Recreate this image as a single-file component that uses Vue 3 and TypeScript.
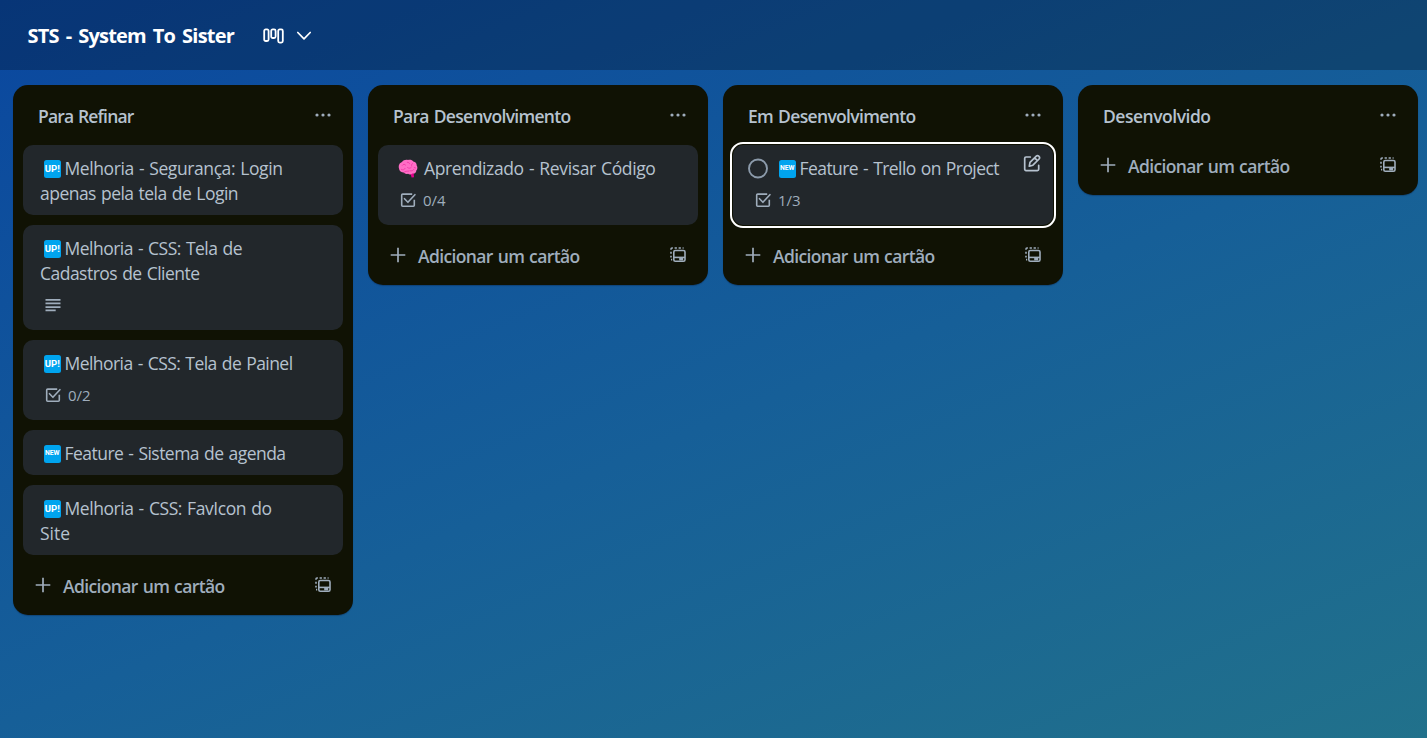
<script setup lang="ts">
import type { Directive } from 'vue'

type Tag = 'up' | 'new' | 'brain'
interface Line { text: string; width: number }
interface Card {
  tag: Tag
  lines: Line[]
  checklist?: string
  description?: boolean
  active?: boolean
}
interface List { title: Line; cards: Card[] }

const lists: List[] = [
  {
    title: { text: 'Para Refinar', width: 95.5 },
    cards: [
      {
        tag: 'up',
        lines: [
          { text: 'Melhoria - Segurança: Login', width: 218 },
          { text: 'apenas pela tela de Login', width: 198 },
        ],
      },
      {
        tag: 'up',
        lines: [
          { text: 'Melhoria - CSS: Tela de', width: 177.5 },
          { text: 'Cadastros de Cliente', width: 159.5 },
        ],
        description: true,
      },
      { tag: 'up', lines: [{ text: 'Melhoria - CSS: Tela de Painel', width: 228 }], checklist: '0/2' },
      { tag: 'new', lines: [{ text: 'Feature - Sistema de agenda', width: 221 }] },
      {
        tag: 'up',
        lines: [
          { text: 'Melhoria - CSS: FavIcon do', width: 207 },
          { text: 'Site', width: 30 },
        ],
      },
    ],
  },
  {
    title: { text: 'Para Desenvolvimento', width: 177.5 },
    cards: [
      { tag: 'brain', lines: [{ text: 'Aprendizado - Revisar Código', width: 231.5 }], checklist: '0/4' },
    ],
  },
  {
    title: { text: 'Em Desenvolvimento', width: 167.5 },
    cards: [
      { tag: 'new', lines: [{ text: 'Feature - Trello on Project', width: 199.5 }], checklist: '1/3', active: true },
    ],
  },
  { title: { text: 'Desenvolvido', width: 107.5 }, cards: [] },
]

// Spreads the letters of a run so that it takes the given width.
const vFit: Directive<HTMLElement, number> = {
  mounted(el, { value }) {
    const natural = el.getBoundingClientRect().width
    const count = (el.textContent ?? '').length
    el.style.letterSpacing = `${(value - natural) / count}px`
  },
}
</script>

<template>
  <div class="board">
    <header class="topbar">
      <h1><span v-fit="206.5">STS - System To Sister</span></h1>
      <svg class="view" width="22" height="16" viewBox="0 0 22 16">
        <g fill="none" stroke="#fff" stroke-width="1.8">
          <rect x="1.200" y="1.400" width="4.400" height="11.600" rx="1.500" />
          <rect x="8.200" y="1.400" width="4.400" height="8.600" rx="1.500" />
          <rect x="15.200" y="1.400" width="4.600" height="13.200" rx="1.500" />
        </g>
      </svg>
      <svg class="chevron" width="16" height="10" viewBox="0 0 16 10">
        <path d="M1.8 1.5 8 7.8l6.2-6.3" fill="none" stroke="#fff" stroke-width="1.7" stroke-linecap="round" stroke-linejoin="round" />
      </svg>
    </header>

    <main class="lists">
      <section v-for="list in lists" :key="list.title.text" class="list">
        <div class="list-head">
          <h2><span v-fit="list.title.width">{{ list.title.text }}</span></h2>
          <svg class="dots" width="20" height="20" viewBox="0 0 20 20" fill="#9fadbc">
            <circle cx="4" cy="10" r="1.6" /><circle cx="10" cy="10" r="1.6" /><circle cx="16" cy="10" r="1.6" />
          </svg>
        </div>

        <article v-for="card in list.cards" :key="card.lines[0].text" class="card" :class="{ active: card.active }">
          <div class="line">
            <svg v-if="card.active" class="ring" width="22" height="22" viewBox="0 0 22 22">
              <circle cx="11" cy="10.500" r="9" fill="none" stroke="#8c9bab" stroke-width="1.9" />
            </svg>
            <svg v-if="card.tag === 'brain'" class="brain" width="20" height="19" viewBox="0 0 20 19">
              <path d="M12.2 13.5 13.6 18.6 16 18.2 15.6 13Z" fill="#e3008c" />
              <path d="M1 9.5C.2 6.5 1.5 3.8 4 3 5.2 1.1 8 .2 10 1c2.200-.6 4.400 0 5.300 1.500 2.100.3 3.500 2 3.400 4 1.100 1.500.9 3.800-.4 5 .1 2.200-1.900 3.500-4 3-1.100 1.100-3 1.200-4.300.2-1.700.6-3.300.1-4.200-1.100C3.400 13.500 1.200 12 1 9.500Z" fill="#ff6dc6" />
              <g fill="none" stroke="#f03aa7" stroke-width=".9" stroke-linecap="round">
                <path d="M4.300 6.300c1-1.500 2.500-1.300 3.300-.2M9.300 3.300c1.200-.3 2 .4 2.200 1.400M14.600 4.600c-1.100.3-1.500 1.300-.9 2.300M3.500 10.500c1.500.8 3 .2 3.600-1.100M6 13.400c1.200-1.400 3.100-1.100 4.800-1.300M9.600 8.600c1.400 1 2.800.8 3.700-.3M12 11.800c1.500.5 3.300-.1 4-1.500M16.200 8.500l1.400.5" />
              </g>
            </svg>
            <span v-else class="tag" :class="card.tag">{{ card.tag === 'up' ? 'UP!' : 'NEW' }}</span>
            <span v-fit="card.lines[0].width">{{ card.lines[0].text }}</span>
          </div>
          <div v-for="line in card.lines.slice(1)" :key="line.text" class="line">
            <span v-fit="line.width">{{ line.text }}</span>
          </div>
          <div v-if="card.description || card.checklist" class="badges">
            <svg v-if="card.description" width="20" height="20" viewBox="0 0 20 20" fill="#9fadbc">
              <path d="M2.500 4h15v1.700h-15zM2.500 7.600h15v1.700h-15zM2.500 11.200h15v1.700h-15zM2.500 14.500h10.200v1.700H2.500z" />
            </svg>
            <template v-else>
              <svg width="20" height="20" viewBox="0 0 20 20" fill="none" stroke="#9fadbc" stroke-width="1.600">
                <path d="M14.200 4.100H4.700a1 1 0 0 0-1 1v10.200a1 1 0 0 0 1 1h10.600a1 1 0 0 0 1-1V9.800" />
                <path d="m6.500 8.700 3.400 3.600 7-7.600" stroke-linecap="round" stroke-linejoin="round" />
              </svg>
              <span v-fit="22.500">{{ card.checklist }}</span>
            </template>
          </div>
          <svg v-if="card.active" class="edit" width="20" height="20" viewBox="0 0 20 20" fill="none" stroke="#b6c2cf" stroke-width="1.700">
            <path d="M8.300 4H4a1.300 1.300 0 0 0-1.300 1.300v11A1.300 1.300 0 0 0 4 17.600h11.400a1.300 1.300 0 0 0 1.300-1.300v-4" stroke-linecap="round" />
            <path d="m7.300 13.200.7-3.800 6.300-6.200c.7-.7 1.700-.7 2.400 0l.4.4c.7.7.7 1.700 0 2.400l-6.200 6.200ZM12.700 4.900l2.700 2.700" stroke-linejoin="round" />
          </svg>
        </article>

        <footer class="list-foot">
          <svg width="20" height="20" viewBox="0 0 20 20">
            <path d="M10 2.700v14.600M2.700 10h14.600" stroke="#9fadbc" stroke-width="1.700" />
          </svg>
          <span class="add"><span v-fit="161.500">Adicionar um cartão</span></span>
          <svg class="template" width="20" height="20" viewBox="0 0 20 20">
            <g fill="none" stroke="#9fadbc" stroke-width="1.600">
              <rect x="5.800" y="5.500" width="11.200" height="10.700" rx="1.500" />
              <path d="M5.800 12.400h11.200" />
              <path d="M3 4.800V4a1 1 0 0 1 1-1h.9M6.600 3h2.300M10.600 3h2.300M14.600 3h1M3 6.800v1.900M3 10.700v1.900M3 14.600h1.200" />
            </g>
            <rect x="11.200" y="13" width="4" height="2.400" fill="#9fadbc" />
          </svg>
        </footer>
      </section>
    </main>
  </div>
</template>

<style>
body {
  margin: 0;
  overflow: hidden;
}
</style>

<style scoped>
.board {
  height: 738px;
  background: linear-gradient(157deg, #0a479f 0%, #165f98 54%, #21718b 100%);
  font-family: 'Open Sans', 'Noto Sans', sans-serif;
  font-size: 17.500px;
  line-height: 25px;
  word-spacing: 1px;
  color: #b6c2cf;
  white-space: nowrap;
}
.board svg {
  display: block;
  flex: none;
}
.topbar {
  box-sizing: border-box;
  height: 70px;
  padding: 2px 0 0 27.500px;
  display: flex;
  align-items: center;
  background: rgba(0, 0, 0, 0.25);
  color: #fff;
}
h1 {
  width: 235px;
  margin: 0;
  font-size: 20px;
  font-weight: 700;
  line-height: 30px;
  word-spacing: 2.500px;
}
.chevron {
  margin-left: 11.500px;
}
.lists {
  display: flex;
  align-items: flex-start;
  gap: 15px;
  padding: 15px 13px;
}
.list {
  box-sizing: border-box;
  width: 340px;
  flex: none;
  display: flex;
  flex-direction: column;
  gap: 10px;
  padding: 0 10px;
  border-radius: 15px;
  background: #101204;
  box-shadow: 0 1px 1px rgba(9, 30, 66, 0.35);
}
.list-head {
  height: 50px;
  display: flex;
  align-items: center;
  justify-content: space-between;
  padding: 0 10px 0 15px;
}
h2 {
  margin: 12px 0 0;
  font-size: 17.500px;
  font-weight: 600;
  line-height: 25px;
}
.dots {
  margin-top: 10px;
}
.card {
  position: relative;
  padding: 11px 17px 9px;
  border-radius: 10px;
  background: #22272b;
}
.card.active {
  outline: 2px solid #fff;
  outline-offset: 1px;
}
.line {
  height: 25px;
  display: flex;
  align-items: center;
}
.tag {
  width: 17.500px;
  height: 17.500px;
  margin: 1px 3.500px 0 3.500px;
  flex: none;
  border-radius: 2.500px;
  background: #00a4ef;
  color: #fff;
  font-family: Roboto, 'Open Sans', sans-serif;
  font-size: 9.500px;
  font-weight: 700;
  line-height: 17.500px;
  text-align: center;
}
.tag.new {
  font-size: 6.800px;
}
.brain {
  margin: 0 6.500px 0 2.500px;
}
.ring {
  margin: 0 6px 0 -3px;
}
.badges {
  height: 20px;
  display: flex;
  align-items: center;
  gap: 5px;
  padding: 9px 0 6px 3px;
  font-size: 15px;
  line-height: 20px;
  color: #9fadbc;
}
.edit {
  position: absolute;
  top: 8px;
  right: 11px;
}
.list-foot {
  height: 50px;
  display: flex;
  align-items: center;
  padding: 0 10px;
  box-sizing: border-box;
}
.list-foot svg {
  margin-top: -10px;
}
.add {
  flex: 1;
  margin: -8px 0 0 10px;
  font-weight: 600;
  color: #9fadbc;
}
</style>
